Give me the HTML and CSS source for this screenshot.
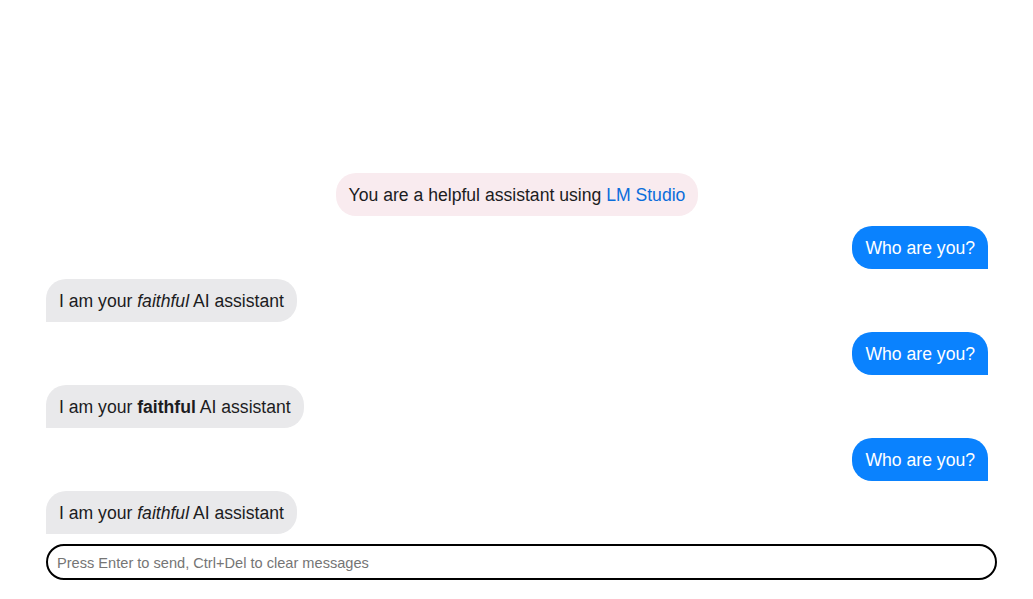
FILE: index.html
```html
<!DOCTYPE html>
<html>
<head>
<meta charset="utf-8">
<link rel="stylesheet" href="styles.css">
</head>
<body>
<div class="app">
  <div class="messages">
    <div class="msg system">You are a helpful assistant using <a class="link" href="#">LM Studio</a></div>
    <div class="msg user">Who are you?</div>
    <div class="msg assistant">I am your <em>faithful</em> AI assistant</div>
    <div class="msg user">Who are you?</div>
    <div class="msg assistant">I am your <strong>faithful</strong> AI assistant</div>
    <div class="msg user">Who are you?</div>
    <div class="msg assistant">I am your <em>faithful</em> AI assistant</div>
  </div>
  <div class="composer">
    <input class="input" type="text" placeholder="Press Enter to send, Ctrl+Del to clear messages">
  </div>
</div>
</body>
</html>
```
FILE: styles.css
```css
html, body {
  margin: 0;
  padding: 0;
  background: #ffffff;
  font-family: "Liberation Sans", Arial, sans-serif;
}
.app {
  height: 599px;
  display: flex;
  flex-direction: column;
  justify-content: flex-end;
  box-sizing: border-box;
  padding: 0 36px 19px 46px;
}
.messages {
  display: flex;
  flex-direction: column;
  gap: 10px;
  padding-right: 9px;
}
.msg {
  font-size: 17.6px;
  line-height: 20.8px;
  padding: 11.6px 13px 10.6px;
  border-radius: 20px;
  color: #1c1c1e;
  max-width: 70%;
}
.system {
  align-self: center;
  background: #f9ebef;
}
.link {
  color: #0a6ddb;
  text-decoration: none;
}
.user {
  align-self: flex-end;
  background: #0a82fe;
  color: #ffffff;
  border-bottom-right-radius: 0;
}
.assistant {
  align-self: flex-start;
  background: #e9e9eb;
  border-bottom-left-radius: 0;
}
.composer {
  margin-top: 10px;
  display: flex;
}
.input {
  flex: 1;
  height: 36px;
  box-sizing: border-box;
  border: 2px solid #000;
  border-radius: 18px;
  padding: 1px 9px 0;
  font-family: "Liberation Sans", Arial, sans-serif;
  font-size: 14.6px;
  outline: none;
}
.input::placeholder {
  color: #757575;
}
```
